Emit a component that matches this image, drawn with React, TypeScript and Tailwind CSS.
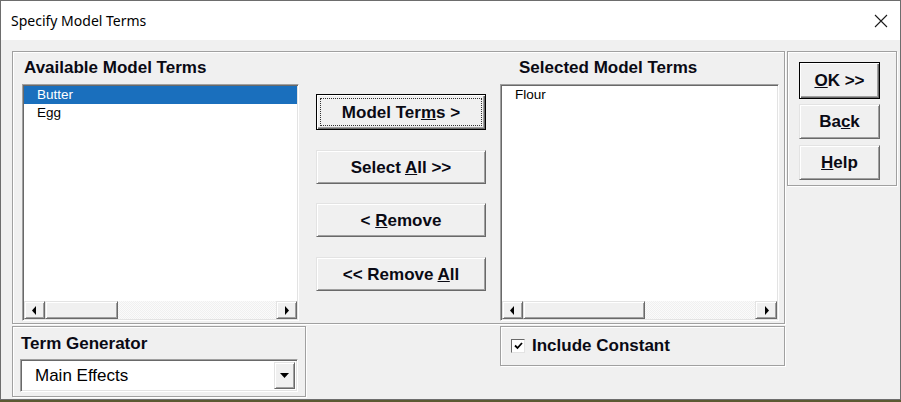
import React from 'react';

const btn3d =
  'flex items-center justify-center bg-[#f0f0f0] border border-t-[#e3e3e3] border-l-[#e3e3e3] border-r-[#696969] border-b-[#696969] shadow-[inset_1px_1px_0_#ffffff,inset_-1px_-1px_0_#a0a0a0] text-[17px] font-bold text-[#0a0a14] leading-none';

const btnFocus =
  'flex items-center justify-center bg-[#f0f0f0] border border-black shadow-[inset_1px_1px_0_#ffffff,inset_-1px_-1px_0_#696969,inset_-2px_-2px_0_#a0a0a0] text-[17px] font-bold text-[#0a0a14] leading-none';

const groupBox = 'border border-[#a0a0a0] shadow-[inset_1px_1px_0_#ffffff,1px_1px_0_#ffffff]';

const sunken =
  'border border-t-[#a0a0a0] border-l-[#a0a0a0] border-r-[#ffffff] border-b-[#ffffff] shadow-[inset_1px_1px_0_#696969,inset_-1px_-1px_0_#e3e3e3]';

const ArrowLeft = () => (
  <svg width="5" height="9" viewBox="0 0 5 9">
    <path d="M4 0 L0 4.5 L4 9 Z" fill="#000" />
  </svg>
);

const ArrowRight = () => (
  <svg width="5" height="9" viewBox="0 0 5 9">
    <path d="M1 0 L5 4.5 L1 9 Z" fill="#000" />
  </svg>
);

const ScrollButton: React.FC<{ children: React.ReactNode; className?: string }> = ({ children, className }) => (
  <div
    className={`h-[18px] bg-[#f0f0f0] border border-t-[#e3e3e3] border-l-[#e3e3e3] border-r-[#696969] border-b-[#696969] shadow-[inset_1px_1px_0_#ffffff,inset_-1px_-1px_0_#a0a0a0] flex items-center justify-center ${className ?? ''}`}
  >
    {children}
  </div>
);

const HScroll: React.FC<{ thumb: number; rightW: number }> = ({ thumb, rightW }) => (
  <div className="flex items-stretch h-[18px] mx-[1px] mb-[1px] bg-[repeating-conic-gradient(#f0f0f0_0_25%,#fbfbfb_0_50%)] bg-[length:2px_2px]">
    <ScrollButton className="w-[21px]">
      <ArrowLeft />
    </ScrollButton>
    <div
      className="h-[18px] bg-[#f0f0f0] border border-t-[#e3e3e3] border-l-[#e3e3e3] border-r-[#696969] border-b-[#696969] shadow-[inset_1px_1px_0_#ffffff,inset_-1px_-1px_0_#a0a0a0]"
      style={{ width: thumb }}
    />
    <div className="flex-1" />
    <ScrollButton className={rightW === 22 ? 'w-[22px]' : 'w-[21px]'}>
      <ArrowRight />
    </ScrollButton>
  </div>
);

export default function App() {
  return (
    <div className="w-[901px] h-[402px] bg-[#5b5a32] overflow-hidden" style={{ fontFamily: '"Liberation Sans", Arial, sans-serif' }}>
      <div className="w-[901px] h-[400px] border border-[#6d6d6d] bg-[#f0f0f0] flex flex-col">
        {/* Title bar */}
        <div className="h-[39px] bg-white flex items-center justify-between pl-[10px] pr-[12px] shrink-0">
          <span className="text-[14px] text-black" style={{ fontFamily: '"Noto Sans", "Open Sans", sans-serif' }}>
            Specify Model Terms
          </span>
          <svg width="14" height="14" viewBox="0 0 14 14">
            <path d="M1 1 L13 13 M13 1 L1 13" stroke="#1a1a1a" strokeWidth="1.1" />
          </svg>
        </div>

        {/* Body */}
        <div className="flex pl-[11px] pt-[11px] gap-[2px]">
          <div className="flex flex-col w-[773px]">
            {/* Main frame */}
            <div className={`h-[273px] flex pl-[9px] ${groupBox}`}>
              {/* Available */}
              <div className="w-[277px] flex flex-col">
                <div className="h-[32px] flex items-center pl-[2px] text-[17px] font-bold text-[#0a0a14]">Available Model Terms</div>
                <div className={`h-[237px] bg-white flex flex-col ${sunken}`}>
                  <div className="flex-1 pt-[1px] px-[1px] text-[13.5px] leading-[18px]">
                    <div className="bg-[#1a6fbd] text-white pl-[13px] h-[18px]">Butter</div>
                    <div className="text-black pl-[13px]">Egg</div>
                  </div>
                  <HScroll thumb={73} rightW={21} />
                </div>
              </div>

              {/* Middle buttons */}
              <div className="w-[170px] ml-[17px] flex flex-col pt-[42px]">
                <div className={`h-[36px] ${btnFocus}`}>
                  <div className="w-[162px] h-[28px] border border-dotted border-[#333] flex items-center justify-center">
                    <span>
                      Model Ter<u>m</u>s &gt;
                    </span>
                  </div>
                </div>
                <div className={`h-[34px] mt-[20px] ${btn3d}`}>
                  <span>
                    Select <u>A</u>ll &gt;&gt;
                  </span>
                </div>
                <div className={`h-[34px] mt-[19px] ${btn3d}`}>
                  <span>
                    &lt; <u>R</u>emove
                  </span>
                </div>
                <div className={`h-[34px] mt-[20px] ${btn3d}`}>
                  <span>
                    &lt;&lt; Remove <u>A</u>ll
                  </span>
                </div>
              </div>

              {/* Selected */}
              <div className="w-[279px] ml-[14px] flex flex-col">
                <div className="h-[32px] flex items-center pl-[19px] text-[17px] font-bold text-[#0a0a14]">Selected Model Terms</div>
                <div className={`h-[237px] bg-white flex flex-col ${sunken}`}>
                  <div className="flex-1 pt-[1px] px-[1px] text-[13.5px] leading-[18px]">
                    <div className="text-black pl-[13px]">Flour</div>
                  </div>
                  <HScroll thumb={122} rightW={22} />
                </div>
              </div>
            </div>

            {/* Bottom row */}
            <div className="flex mt-[2px]">
              <div className={`w-[294px] h-[71px] flex flex-col px-[7px] ${groupBox}`}>
                <div className="h-[32px] flex items-center pl-[1px] pt-[1px] text-[17px] font-bold text-[#0a0a14]">Term Generator</div>
                <div className={`h-[33px] bg-white flex items-center justify-between pr-[2px] ${sunken}`}>
                  <span className="pl-[14px] text-[17px] text-black">Main Effects</span>
                  <div className="w-[21px] h-[27px] bg-[#f0f0f0] border border-t-[#e3e3e3] border-l-[#e3e3e3] border-r-[#696969] border-b-[#696969] shadow-[inset_1px_1px_0_#ffffff,inset_-1px_-1px_0_#a0a0a0] flex items-center justify-center">
                    <svg width="9" height="5" viewBox="0 0 9 5">
                      <path d="M0 0 L9 0 L4.5 5 Z" fill="#000" />
                    </svg>
                  </div>
                </div>
              </div>
              <div className="w-[194px]" />
              <div className={`w-[285px] h-[40px] flex items-center pl-[10px] gap-[7px] ${groupBox}`}>
                <div className="w-[14px] h-[14px] bg-white border border-t-[#696969] border-l-[#696969] border-r-[#e3e3e3] border-b-[#e3e3e3] flex items-center justify-center">
                  <svg width="9" height="8" viewBox="0 0 9 8">
                    <path d="M1 3.5 L3.5 6 L8 1" stroke="#000" strokeWidth="1.8" fill="none" />
                  </svg>
                </div>
                <span className="text-[17px] font-bold text-[#0a0a14]">Include Constant</span>
              </div>
            </div>
          </div>

          {/* Right frame */}
          <div className={`w-[110px] h-[135px] flex flex-col items-start pl-[11px] pt-[10px] ${groupBox}`}>
            <div className={`w-[81px] h-[37px] ${btnFocus}`}>
              <span>
                <u>O</u>K &gt;&gt;
              </span>
            </div>
            <div className={`w-[81px] h-[35px] mt-[5px] ${btn3d}`}>
              <span>
                Ba<u>c</u>k
              </span>
            </div>
            <div className={`w-[81px] h-[35px] mt-[6px] ${btn3d}`}>
              <span>
                <u>H</u>elp
              </span>
            </div>
          </div>
        </div>
      </div>
    </div>
  );
}
